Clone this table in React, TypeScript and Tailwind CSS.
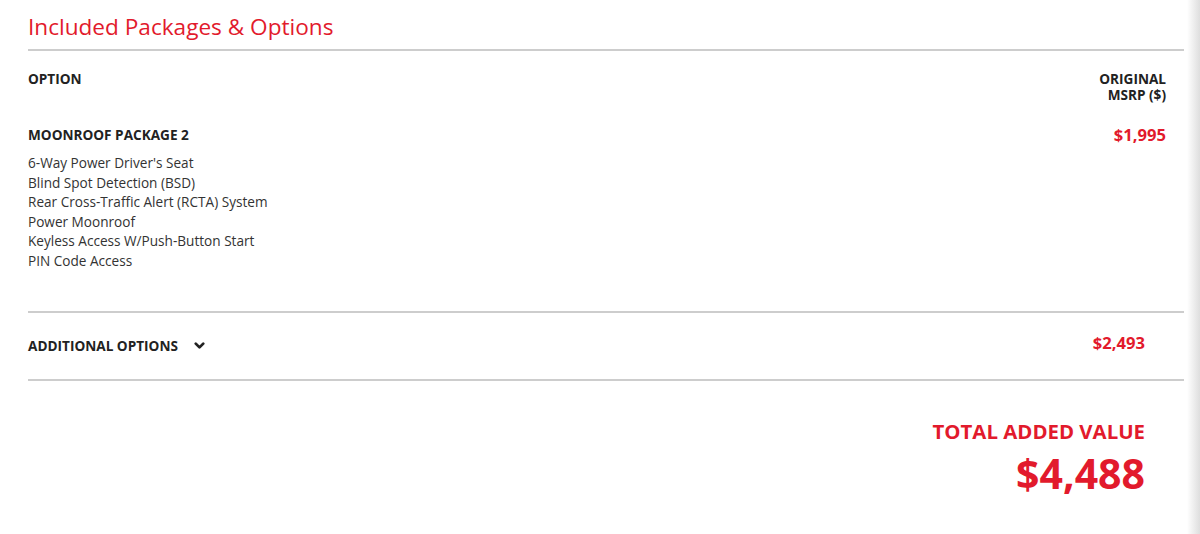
import { ChevronDown } from 'lucide-react';

const packageItems = [
  "6-Way Power Driver's Seat",
  'Blind Spot Detection (BSD)',
  'Rear Cross-Traffic Alert (RCTA) System',
  'Power Moonroof',
  'Keyless Access W/Push-Button Start',
  'PIN Code Access',
];

export default function App() {
  return (
    <div className="flex h-[534px] w-[1200px] overflow-hidden bg-white font-['Open_Sans',sans-serif] text-[#222]">
      <div className="flex-1 pl-[28px] pr-[3px]">
        {/* Title */}
        <h2 className="border-b-2 border-[#cdcdcd] pt-[11px] pb-[6px] text-[22.6px] leading-[32px] text-[#e21a2c]">
          Included Packages &amp; Options
        </h2>

        {/* Column headers */}
        <div className="flex items-start justify-between pt-[20px] pr-[18px] text-[13.6px] font-bold leading-[16px]">
          <span>OPTION</span>
          <span className="text-right">
            ORIGINAL
            <br />
            MSRP ($)
          </span>
        </div>

        {/* Package */}
        <div className="flex items-start justify-between pt-[22px] pr-[18px] pb-[40px] border-b-2 border-[#cdcdcd]">
          <div>
            <div className="text-[13.6px] font-bold leading-[20px]">MOONROOF PACKAGE 2</div>
            <ul className="mt-[8px] text-[13.6px] leading-[19.6px] text-[#333]">
              {packageItems.map((item) => (
                <li key={item}>{item}</li>
              ))}
            </ul>
          </div>
          <span className="text-[16.6px] font-bold leading-[20px] text-[#e21a2c]">$1,995</span>
        </div>

        {/* Additional options */}
        <div className="flex h-[68px] items-start justify-between border-b-2 border-[#cdcdcd] pr-[39px]">
          <button className="mt-[23px] flex items-center gap-[14px] text-[13.6px] font-bold leading-[20px]">
            ADDITIONAL OPTIONS
            <ChevronDown className="h-[15px] w-[15px]" strokeWidth={4.5} />
          </button>
          <span className="mt-[20px] text-[16.6px] font-bold leading-[20px] text-[#e21a2c]">$2,493</span>
        </div>

        {/* Total */}
        <div className="flex flex-col items-end pt-[36px] pr-[39px] text-[#e21a2c]">
          <span className="text-[20.4px] font-bold leading-[28px]">TOTAL ADDED VALUE</span>
          <span className="mt-[8px] text-[41px] font-bold leading-[40px]">$4,488</span>
        </div>
      </div>
      <div className="w-[13px] bg-gradient-to-r from-white to-[#dedede]" />
    </div>
  );
}
